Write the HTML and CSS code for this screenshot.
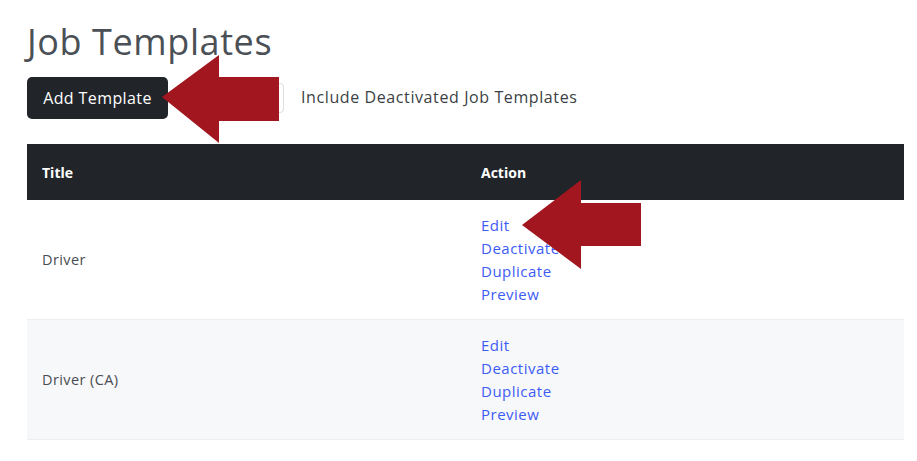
FILE: index.html
```html
<!DOCTYPE html>
<html lang="en">
<head>
<meta charset="utf-8">
<title>Job Templates</title>
<link rel="stylesheet" href="styles.css">
</head>
<body>
<main class="page">
  <h1 class="page-title">Job Templates</h1>
  <div class="toolbar">
    <button class="btn-dark" type="button">Add Template</button>
    <span class="check-box"></span>
    <label class="check-label">Include Deactivated Job Templates</label>
  </div>
  <table class="tpl-table">
    <thead>
      <tr><th class="col-title">Title</th><th>Action</th></tr>
    </thead>
    <tbody>
      <tr>
        <td>Driver</td>
        <td><div class="actions"><a href="#">Edit</a><a href="#">Deactivate</a><a href="#">Duplicate</a><a href="#">Preview</a></div></td>
      </tr>
      <tr class="striped">
        <td>Driver (CA)</td>
        <td><div class="actions"><a href="#">Edit</a><a href="#">Deactivate</a><a href="#">Duplicate</a><a href="#">Preview</a></div></td>
      </tr>
    </tbody>
  </table>
</main>
<svg class="annotations" width="917" height="461" viewBox="0 0 917 461" aria-hidden="true">
  <polygon points="162,97 219,55 219,77 279,77 279,121 219,121 219,143" fill="#a2171f"/>
  <polygon points="522,225 581,180 581,203 641,203 641,246 581,246 581,269" fill="#a2171f"/>
</svg>
</body>
</html>
```
FILE: styles.css
```css
html, body {
  margin: 0;
  padding: 0;
  background: #ffffff;
}
body {
  font-family: "Open Sans", "Liberation Sans", sans-serif;
  color: #4a4d52;
  position: relative;
  width: 917px;
  height: 461px;
  overflow: hidden;
}
.page {
  padding: 21px 13px 0 27px;
}
.page-title {
  margin: 0;
  font-size: 36px;
  font-weight: 400;
  line-height: 42px;
  letter-spacing: 0.6px;
  color: #4b5056;
}
.toolbar {
  display: flex;
  align-items: center;
  margin-top: 14px;
  height: 42px;
}
.btn-dark {
  width: 141px;
  height: 42px;
  border: 0;
  border-radius: 5px;
  background: #212529;
  color: #ffffff;
  font-family: inherit;
  font-size: 16px;
  letter-spacing: 0.4px;
  padding: 0;
}
.check-box {
  width: 30px;
  height: 30px;
  margin-left: 86px;
  border: 1px solid #dcdfe3;
  border-radius: 4px;
  box-sizing: border-box;
}
.check-label {
  margin-left: 17px;
  font-size: 16px;
  letter-spacing: 0.6px;
  color: #3b3f44;
  padding-bottom: 2px;
}
.tpl-table {
  margin-top: 25px;
  width: 877px;
  border-collapse: collapse;
  font-size: 14.5px;
  letter-spacing: 0.4px;
}
.tpl-table th {
  background: #212529;
  color: #ffffff;
  text-align: left;
  font-weight: 700;
  font-size: 14px;
  letter-spacing: 0;
  height: 56px;
  padding: 0 15px;
}
.tpl-table .col-title {
  width: 409px;
}
.tpl-table td {
  padding: 13px 15px;
  border-bottom: 1px solid #eceef1;
  vertical-align: middle;
  color: #4a4d52;
}
.tpl-table tr.striped td {
  background: #f7f8fa;
}
.actions {
  display: flex;
  flex-direction: column;
  line-height: 23px;
  padding-top: 1px;
}
.actions a {
  color: #3d5cf5;
  text-decoration: none;
  font-size: 15px;
  letter-spacing: 0.5px;
}
.annotations {
  position: absolute;
  left: 0;
  top: 0;
  pointer-events: none;
}
```
